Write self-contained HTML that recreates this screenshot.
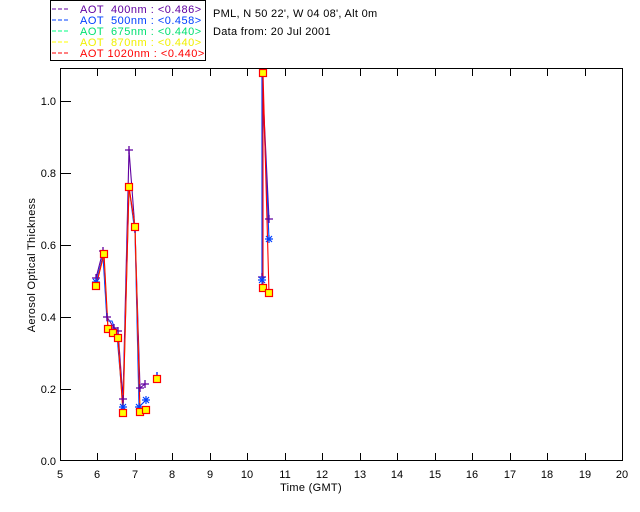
<!DOCTYPE html>
<html><head><style>
html,body{margin:0;padding:0;background:#fff;width:640px;height:512px;overflow:hidden}
svg{display:block}
text{font-family:"Liberation Sans",sans-serif;font-size:11px}
</style></head><body>
<svg width="640" height="512" viewBox="0 0 640 512">
<rect x="50.5" y="0.5" width="155" height="60" fill="none" stroke="#000"/>
<g font-size="11" letter-spacing="0.5">
<line x1="52" y1="9" x2="70" y2="9" stroke="#6000a0" stroke-dasharray="4,2"/><text x="80" y="13" fill="#6000a0" xml:space="preserve">AOT  400nm : &lt;0.486&gt;</text>
<line x1="52" y1="20" x2="70" y2="20" stroke="#0040ff" stroke-dasharray="4,2"/><text x="80" y="24" fill="#0040ff" xml:space="preserve">AOT  500nm : &lt;0.458&gt;</text>
<line x1="52" y1="31" x2="70" y2="31" stroke="#00ff80" stroke-dasharray="4,2"/><text x="80" y="35" fill="#00e070" xml:space="preserve">AOT  675nm : &lt;0.440&gt;</text>
<line x1="52" y1="42" x2="70" y2="42" stroke="#ffff00" stroke-dasharray="4,2"/><text x="80" y="46" fill="#f0f000" xml:space="preserve">AOT  870nm : &lt;0.440&gt;</text>
<line x1="52" y1="53" x2="70" y2="53" stroke="#ff0000" stroke-dasharray="4,2"/><text x="80" y="57" fill="#ff0000" xml:space="preserve">AOT 1020nm : &lt;0.440&gt;</text>
</g>
<text x="213" y="17" letter-spacing="0.3">PML, N 50 22', W 04 08', Alt 0m</text>
<text x="213" y="35" letter-spacing="0.3">Data from: 20 Jul 2001</text>
<g stroke="#000" fill="none">
<rect x="60.5" y="68.5" width="562" height="392"/>
<path d="M97.5 461v-8M135.5 461v-8M172.5 461v-8M210.5 461v-8M247.5 461v-8M285.5 461v-8M322.5 461v-8M360.5 461v-8M397.5 461v-8M435.5 461v-8M472.5 461v-8M510.5 461v-8M547.5 461v-8M585.5 461v-8"/>
<path d="M97.5 68v8M135.5 68v8M172.5 68v8M210.5 68v8M247.5 68v8M285.5 68v8M322.5 68v8M360.5 68v8M397.5 68v8M435.5 68v8M472.5 68v8M510.5 68v8M547.5 68v8M585.5 68v8"/>
<path d="M60 389.5h11M60 317.5h11M60 245.5h11M60 173.5h11M60 101.5h11"/>
</g>
<g text-anchor="middle" font-size="10">
<text x="60" y="478">5</text><text x="97" y="478">6</text><text x="135" y="478">7</text><text x="172" y="478">8</text><text x="210" y="478">9</text><text x="247" y="478">10</text><text x="285" y="478">11</text><text x="322" y="478">12</text><text x="360" y="478">13</text><text x="397" y="478">14</text><text x="435" y="478">15</text><text x="472" y="478">16</text><text x="510" y="478">17</text><text x="547" y="478">18</text><text x="585" y="478">19</text><text x="622" y="478">20</text>
<text x="311" y="491" letter-spacing="0.3">Time (GMT)</text>
</g>
<g text-anchor="end" font-size="10">
<text x="56" y="465">0.0</text><text x="56" y="393">0.2</text><text x="56" y="321">0.4</text><text x="56" y="249">0.6</text><text x="56" y="177">0.8</text><text x="56" y="105">1.0</text>
</g>
<text transform="translate(35,265) rotate(-90)" text-anchor="middle" font-size="10" letter-spacing="0.3">Aerosol Optical Thickness</text>
<g fill="none" stroke-width="1.1">
<polyline stroke="#6000a0" points="96,278 103,251 107,317 114,328 118,331 123,399 129,150 135,229 140,388 145,384"/>
<polyline stroke="#0040ff" points="96,282 103,256 107,321 112,321 117,335 123,407 129,187 135,233 139,407 146,400"/>
<polyline stroke="#ffff00" points="96,286 104,254 108,329 113,333 118,338 123,413 129,187 135,227 140,412 146,410"/>
<polyline stroke="#ff0000" points="96,286 104,254 108,329 113,333 118,338 123,413 129,187 135,227 140,412 146,410"/>
<polyline stroke="#6000a0" points="262,277 262,73 269,219"/>
<polyline stroke="#0040ff" points="262,280 262,75 269,239"/>
<polyline stroke="#ff0000" points="263,288 263,73 269,293"/>
</g>
<g stroke="#6000a0" stroke-width="1.3">
<path d="M92 278h8M96 274v8M99 251h8M103 247v8M103 317h8M107 313v8M110 328h8M114 324v8M114 331h8M118 327v8M119 399h8M123 395v8M125 150h8M129 146v8M131 229h8M135 225v8M136 388h8M140 384v8M141 384h8M145 380v8M153 376h8M157 372v8M258 277h8M262 273v8M265 219h8M269 215v8"/>
</g>
<g stroke="#0040ff" stroke-width="1.2">
<path d="M92 282h8M96 278v8M93 279l6 6M99 279l-6 6M119 407h8M123 403v8M120 404l6 6M126 404l-6 6M135 407h8M139 403v8M136 404l6 6M142 404l-6 6M142 400h8M146 396v8M143 397l6 6M149 397l-6 6M258 280h8M262 276v8M259 277l6 6M265 277l-6 6M265 239h8M269 235v8M266 236l6 6M272 236l-6 6M153 376h8M157 372v8"/>
</g>
<g fill="#ffff00" stroke="#ff0000" stroke-width="1.2">
<rect x="92.5" y="282.5" width="7" height="7"/><rect x="100.5" y="250.5" width="7" height="7"/><rect x="104.5" y="325.5" width="7" height="7"/><rect x="109.5" y="329.5" width="7" height="7"/><rect x="114.5" y="334.5" width="7" height="7"/><rect x="119.5" y="409.5" width="7" height="7"/><rect x="125.5" y="183.5" width="7" height="7"/><rect x="131.5" y="223.5" width="7" height="7"/><rect x="136.5" y="408.5" width="7" height="7"/><rect x="142.5" y="406.5" width="7" height="7"/><rect x="153.5" y="375.5" width="7" height="7"/><rect x="259.5" y="69.5" width="7" height="7"/><rect x="259.5" y="284.5" width="7" height="7"/><rect x="265.5" y="289.5" width="7" height="7"/>
</g>
</svg>
</body></html>
